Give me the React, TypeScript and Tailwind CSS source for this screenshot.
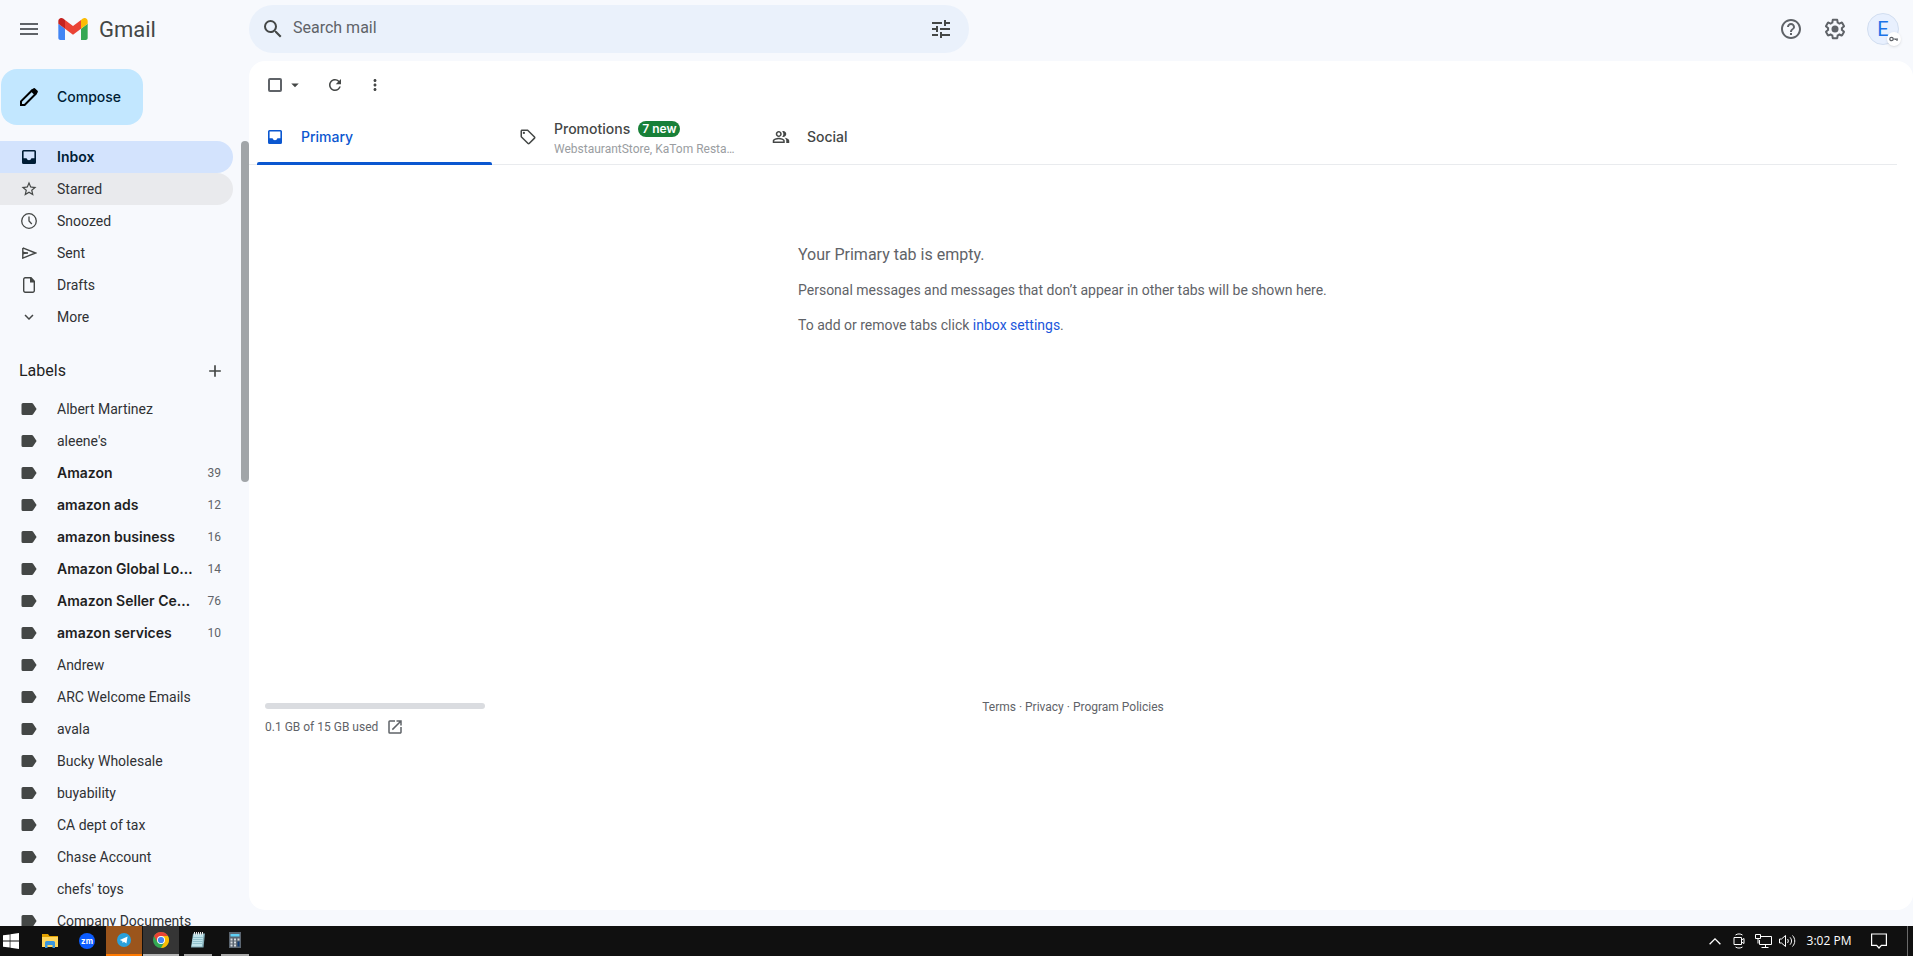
import React, { useState } from "react";
import {
  MdAdd,
  MdArrowDropDown,
  MdExpandMore,
  MdHelpOutline,
  MdMenu,
  MdMoreVert,
  MdOpenInNew,
  MdOutlinePeopleAlt,
  MdOutlineSell,
  MdRefresh,
  MdSearch,
  MdStarBorder,
  MdTune,
} from "react-icons/md";

type Label = { name: string; count?: number };

const labels: Label[] = [
  { name: "Albert Martinez" },
  { name: "aleene's" },
  { name: "Amazon", count: 39 },
  { name: "amazon ads", count: 12 },
  { name: "amazon business", count: 16 },
  { name: "Amazon Global Lo…", count: 14 },
  { name: "Amazon Seller Ce…", count: 76 },
  { name: "amazon services", count: 10 },
  { name: "Andrew" },
  { name: "ARC Welcome Emails" },
  { name: "avala" },
  { name: "Bucky Wholesale" },
  { name: "buyability" },
  { name: "CA dept of tax" },
  { name: "Chase Account" },
  { name: "chefs' toys" },
  { name: "Company Documents" },
];

function GmailMark() {
  return (
    <svg viewBox="52 42 88 66" className="h-[22px] w-[30px]" aria-hidden="true">
      <path fill="#4285f4" d="M58 108h14V74L52 59v43c0 3.32 2.69 6 6 6" />
      <path fill="#34a853" d="M120 108h14c3.32 0 6-2.69 6-6V59l-20 15" />
      <path fill="#fbbc04" d="M120 48v26l20-15v-8c0-7.42-8.47-11.65-14.4-7.2" />
      <path fill="#ea4335" d="M72 74V48l24 18 24-18v26L96 92" />
      <path fill="#c5221f" d="M52 51v8l20 15V48l-5.6-4.2c-5.94-4.45-14.4-.22-14.4 7.2" />
    </svg>
  );
}

function PencilIcon() {
  return (
    <svg viewBox="0 0 18 18" className="size-[18px]" aria-hidden="true">
      <path fill="none" stroke="#000" strokeWidth="2" d="M1 17v-3.600L12.200 2.200l3.600 3.600L4.600 17z" />
      <path fill="#000" d="M10.500 3 13 .7a1.700 1.700 0 0 1 2.400 0l1.900 1.900a1.700 1.700 0 0 1 0 2.400L15 7.500z" />
    </svg>
  );
}

function InboxIcon() {
  return (
    <svg viewBox="0 0 14 14" className="size-[14px] shrink-0" aria-hidden="true">
      <path
        fill="currentColor"
        fillRule="evenodd"
        d="M1.500 0h11A1.500 1.500 0 0 1 14 1.500v11a1.500 1.500 0 0 1-1.500 1.500h-11A1.500 1.500 0 0 1 0 12.500v-11A1.500 1.500 0 0 1 1.500 0zM1.600 1.600v6.600h3C4.900 9.400 5.900 10.200 7 10.200s2.100-.8 2.400-2h3V1.600z"
      />
    </svg>
  );
}

function ClockIcon() {
  return (
    <svg viewBox="0 0 16 16" className="size-4 shrink-0" fill="none" stroke="currentColor" strokeWidth="1.300" aria-hidden="true">
      <circle cx="8" cy="8" r="7.300" />
      <path d="M8 3.500V8l2.800 3" />
    </svg>
  );
}

function SendIcon() {
  return (
    <svg viewBox="0 0 15 12" className="h-3 w-[15px]" aria-hidden="true">
      <path d="M.8.9 13.500 6 .8 11.100V.9M.8 6H6" fill="none" stroke="currentColor" strokeWidth="1.400" />
      <path d="M1 4.600 6.500 6 1 7.400" fill="currentColor" />
    </svg>
  );
}

function FileIcon() {
  return (
    <svg viewBox="0 0 12 16" className="h-4 w-3" aria-hidden="true">
      <path d="M.7 2.200A1.500 1.500 0 0 1 2.200.7H8l3.300 3.600v9.500a1.500 1.500 0 0 1-1.500 1.500H2.200a1.500 1.500 0 0 1-1.500-1.500z" fill="none" stroke="currentColor" strokeWidth="1.400" />
      <path d="M7 .7h1.200L11.700 4.500V5.500H7z" fill="currentColor" />
    </svg>
  );
}

function LabelIcon() {
  return (
    <svg viewBox="0 0 16 12" className="h-3 w-4" aria-hidden="true">
      <path fill="#444746" d="M2 0h8.800c.5 0 1 .25 1.300.65L15.600 6l-3.500 5.350c-.3.4-.8.650-1.300.650H2a1.500 1.500 0 0 1-1.500-1.500v-9A1.500 1.500 0 0 1 2 0z" />
    </svg>
  );
}

function GearIcon() {
  return (
    <svg viewBox="0 0 24 24" className="size-6" aria-hidden="true">
      <path
        fill="currentColor"
        d="M13.850 22.250h-3.700c-.740 0-1.360-.540-1.450-1.270l-.270-1.890c-.270-.140-.530-.290-.790-.460l-1.800.720c-.700.260-1.470-.030-1.810-.650L2.200 15.530c-.350-.660-.200-1.440.360-1.880l1.530-1.190c-.010-.150-.020-.300-.020-.460 0-.150.010-.310.020-.460l-1.520-1.190c-.590-.450-.740-1.260-.370-1.880l1.850-3.190c.340-.620 1.110-.900 1.790-.630l1.810.730c.260-.170.520-.320.780-.460l.270-1.910c.090-.700.710-1.250 1.440-1.250h3.700c.740 0 1.360.540 1.450 1.270l.270 1.890c.270.140.530.290.790.460l1.800-.720c.710-.260 1.480.030 1.820.650l1.840 3.180c.360.660.200 1.440-.360 1.880l-1.520 1.190c.010.150.020.300.020.460s-.010.310-.020.460l1.520 1.190c.560.450.720 1.230.370 1.860l-1.860 3.220c-.340.620-1.110.900-1.800.630l-1.800-.720c-.260.170-.520.320-.780.460l-.270 1.910c-.100.680-.720 1.220-1.460 1.220zm-3.230-2h2.760l.370-2.550.530-.220c.440-.180.880-.440 1.340-.780l.450-.340 2.380.960 1.380-2.400-2.030-1.580.070-.560c.030-.260.060-.510.060-.780s-.030-.530-.060-.780l-.070-.560 2.030-1.580-1.390-2.400-2.390.960-.450-.350c-.420-.320-.870-.580-1.330-.770l-.520-.220-.370-2.550h-2.760l-.370 2.550-.530.210c-.440.190-.880.440-1.340.790l-.450.330-2.380-.950-1.390 2.390 2.030 1.580-.070.560a7 7 0 0 0-.060.790c0 .260.020.530.060.780l.070.560-2.030 1.580 1.380 2.400 2.390-.960.450.350c.430.330.860.580 1.330.770l.530.220.380 2.550z"
      />
      <circle cx="12" cy="12" r="3.500" fill="currentColor" />
    </svg>
  );
}

function NavItem({ icon, text, state }: { icon: React.ReactNode; text: string; state?: "active" | "hover" }) {
  const tone =
    state === "active"
      ? "bg-[#d3e3fd] font-[Inter,sans-serif] font-semibold text-[#001d35]"
      : state === "hover"
        ? "bg-[#e9eaed] text-[#303134]"
        : "text-[#303134]";
  return (
    <li>
      <a href="#" className={`flex h-8 items-center rounded-r-full pl-5 ${tone}`}>
        <span className={`flex w-[18px] justify-center ${state === "active" ? "text-[#001d35]" : "text-[#444746]"}`}>{icon}</span>
        <span className="pl-[19px]">{text}</span>
      </a>
    </li>
  );
}

function Sidebar() {
  return (
    <aside className="flex w-[249px] shrink-0 flex-col">
      <div className="px-px pt-2">
        <button className="flex h-14 w-[142px] items-center gap-[19px] rounded-2xl bg-[#c2e7ff] pl-[19px] font-[Inter,sans-serif] text-sm font-medium text-[#001d35]">
          <PencilIcon />
          Compose
        </button>
      </div>
      <div className="mt-4 flex min-h-0 flex-1">
        <nav className="min-w-0 flex-1 overflow-hidden pr-2 text-sm" aria-label="Mailboxes">
          <ul>
            <NavItem state="active" text="Inbox" icon={<InboxIcon />} />
            <NavItem state="hover" text="Starred" icon={<MdStarBorder size={18} />} />
            <NavItem text="Snoozed" icon={<ClockIcon />} />
            <NavItem text="Sent" icon={<SendIcon />} />
            <NavItem text="Drafts" icon={<FileIcon />} />
            <NavItem text="More" icon={<MdExpandMore size={18} />} />
          </ul>
          <div className="flex h-[60px] items-center justify-between pt-4 pr-2 pl-[19px]">
            <h2 className="text-base text-[#1f1f1f]">Labels</h2>
            <button aria-label="Create new label" className="text-[#444746]">
              <MdAdd size={20} />
            </button>
          </div>
          <ul>
            {labels.map((l) => (
              <li key={l.name}>
                <a href="#" className="flex h-8 items-center pr-3 pl-[21px]">
                  <LabelIcon />
                  <span className={`ml-5 whitespace-nowrap ${l.count ? "font-[Inter,sans-serif] font-semibold text-[#1f1f1f]" : "text-[#303134]"}`}>
                    {l.name}
                  </span>
                  {l.count && <span className="ml-auto text-xs text-[#5f6368]">{l.count}</span>}
                </a>
              </li>
            ))}
          </ul>
        </nav>
        <div className="h-[341px] w-2 rounded-full bg-[#a1a5a8]" />
      </div>
    </aside>
  );
}

function Header() {
  return (
    <header className="flex h-[61px] shrink-0 items-start text-[#5f6368]">
      <div className="flex h-[58px] w-[249px] items-center pl-[17px]">
        <button aria-label="Main menu">
          <MdMenu size={24} />
        </button>
        <a href="#" className="ml-[17px] flex items-center gap-[11px] text-[22px] text-[#444746]" aria-label="Gmail">
          <GmailMark />
          Gmail
        </a>
      </div>
      <form role="search" className="mt-[5px] flex h-12 w-[720px] items-center rounded-full bg-[#eaf1fb] pr-4 pl-3">
        <button type="button" aria-label="Search" className="text-[#444746]">
          <MdSearch size={24} />
        </button>
        <input aria-label="Search mail" placeholder="Search mail" className="ml-2 min-w-0 flex-1 pb-[3px] text-base outline-none placeholder:text-[#5f6368]" />
        <button type="button" aria-label="Show search options" className="text-[#444746]">
          <MdTune size={24} />
        </button>
      </form>
      <div className="ml-auto flex h-[58px] items-center gap-5 pr-[14px]">
        <button aria-label="Support">
          <MdHelpOutline size={24} />
        </button>
        <button aria-label="Settings">
          <GearIcon />
        </button>
        <button aria-label="Account" className="relative flex size-8 items-center justify-center rounded-full border border-[#d2def0] bg-[#e8f0fe] text-xl text-[#1a73e8]">
          E
          <span className="absolute -right-[3px] -bottom-[2px] flex size-[14px] items-center justify-center rounded-full bg-white shadow">
            <svg viewBox="0 0 10 6" className="h-[6px] w-[10px]" aria-hidden="true">
              <circle cx="2.500" cy="3" r="1.700" fill="none" stroke="#5f6368" strokeWidth="1.200" />
              <path d="M4.200 3H9M8 3v2M6.500 3v1" fill="none" stroke="#5f6368" strokeWidth="1.200" />
            </svg>
          </span>
        </button>
      </div>
    </header>
  );
}

function MailPanel() {
  const [checked, setChecked] = useState(false);
  return (
    <main className="mb-4 flex min-w-0 flex-1 flex-col rounded-2xl bg-white pr-4">
      <div className="flex h-12 items-center pl-[19px] text-[#444746]">
        <input
          type="checkbox"
          aria-label="Select"
          checked={checked}
          onChange={(e) => setChecked(e.target.checked)}
          className="size-[14px] appearance-none rounded-xs border-2 border-[#5f6368] checked:bg-[#5f6368]"
        />
        <button aria-label="Select options" className="ml-1">
          <MdArrowDropDown size={18} />
        </button>
        <button aria-label="Refresh" className="ml-[22px]">
          <MdRefresh size={18} />
        </button>
        <button aria-label="More" className="ml-[22px]">
          <MdMoreVert size={18} />
        </button>
      </div>
      <div role="tablist" className="flex h-14 border-b border-[#e9ebee] pl-2 font-[Inter,sans-serif] text-sm font-medium text-[#444746]">
        <button role="tab" aria-selected="true" className="-mb-px flex w-[235px] flex-col text-[#0b57d0]">
          <span className="flex flex-1 items-center gap-[19px] pt-[3px] pl-[11px]">
            <InboxIcon />
            Primary
          </span>
          <span className="h-[3px] w-full rounded-t-xs bg-[#0b57d0]" />
        </button>
        <button role="tab" aria-selected="false" className="flex w-[253px] items-center gap-[17px] pl-[27px] text-left">
          <MdOutlineSell size={18} className="shrink-0" />
          <span className="w-[184px] pt-1">
            <span className="flex h-5 items-center gap-2">
              Promotions
              <span className="rounded-full bg-[#188038] px-1 text-xs leading-4 font-semibold text-white">7 new</span>
            </span>
            <span className="block h-5 font-[Roboto,sans-serif] text-xs leading-5 font-normal whitespace-nowrap text-[#9a9da1]">
              WebstaurantStore, KaTom Resta…
            </span>
          </span>
        </button>
        <button role="tab" aria-selected="false" className="flex items-center gap-[17px] pl-[27px]">
          <MdOutlinePeopleAlt size={18} />
          Social
        </button>
      </div>
      <section className="mx-auto w-[550px] pt-20 text-sm text-[#5f6368]">
        <p className="text-base leading-5">Your Primary tab is empty.</p>
        <p className="mt-[15px] leading-5 whitespace-nowrap">Personal messages and messages that don’t appear in other tabs will be shown here.</p>
        <p className="mt-[15px] leading-5">
          To add or remove tabs click{" "}
          <a href="#" className="text-[#1a56db]">
            inbox settings
          </a>
          .
        </p>
      </section>
      <footer className="mt-auto mb-[173px] grid grid-cols-3 pr-4 pl-4 text-xs text-[#5f6368]">
        <div className="pt-1">
          <div className="h-[6px] w-[220px] rounded-full bg-[#dadce0]" />
          <p className="mt-2 flex items-center gap-2 leading-5">
            0.1 GB of 15 GB used
            <a href="#" aria-label="Manage storage">
              <MdOpenInNew size={18} />
            </a>
          </p>
        </div>
        <p className="text-center leading-4">
          <a href="#">Terms</a> · <a href="#">Privacy</a> · <a href="#">Program Policies</a>
        </p>
      </footer>
    </main>
  );
}

function TaskButton({ name, className, children }: { name: string; className?: string; children: React.ReactNode }) {
  return (
    <button aria-label={name} className={`flex h-full w-9 items-center justify-center ${className ?? ""}`}>
      {children}
    </button>
  );
}

function Taskbar() {
  return (
    <div className="flex h-[30px] shrink-0 items-stretch gap-px bg-[#101010] text-white">
      <button aria-label="Start" className="flex w-[31px] items-center pl-[3px]">
        <svg viewBox="0 0 16 16" className="size-4" aria-hidden="true">
          <path fill="#fff" d="M0 2.300 6.700 1.400v6.200H0zM7.400 1.300 16 0v7.600H7.400zM0 8.400h6.700v6.200L0 13.700zM7.400 8.400H16V16l-8.600-1.300z" />
        </svg>
      </button>
      <TaskButton name="File Explorer">
        <svg viewBox="0 0 16 14" className="h-[14px] w-4" aria-hidden="true">
          <path fill="#e2a100" d="M0 0h6l1.500 2H16v4H0z" />
          <path fill="#ffd75e" d="M0 3h16v10H0z" />
          <path fill="#3a96dd" d="M3 14V8.500A1.500 1.500 0 0 1 4.500 7h7A1.500 1.500 0 0 1 13 8.500V14h-2.500v-3h-5v3z" />
        </svg>
      </TaskButton>
      <TaskButton name="Zoom">
        <span className="flex size-4 items-center justify-center rounded-full bg-[#0b5cff] font-[Inter,sans-serif] text-[8px] leading-none font-bold">zm</span>
      </TaskButton>
      <TaskButton name="Telegram" className="border-b-2 border-[#ff7a00] bg-[#9b551c]">
        <svg viewBox="0 0 14 14" className="size-[14px]" aria-hidden="true">
          <circle cx="7" cy="7" r="7" fill="#2aa1dc" />
          <path fill="#fff" d="M2.800 6.900 10.600 3.600 9.400 10.400 6.900 8.700 5.600 9.900 5.300 7.900z" />
        </svg>
      </TaskButton>
      <TaskButton name="Chrome" className="border-b-2 border-[#b5b5b5] bg-[#353535]">
        <svg viewBox="0 0 16 16" className="size-4" aria-hidden="true">
          <circle cx="8" cy="8" r="8" fill="#34a853" />
          <path fill="#ea4335" d="M1.070 4A8 8 0 0 1 14.930 4H8L4.540 10z" />
          <path fill="#fbbc04" d="M14.930 4A8 8 0 0 1 8 16l3.460-6L8 4z" />
          <circle cx="8" cy="8" r="4" fill="#fff" />
          <circle cx="8" cy="8" r="3.100" fill="#4285f4" />
        </svg>
      </TaskButton>
      <TaskButton name="Notepad" className="px-1">
        <span className="flex h-full w-7 items-center justify-center border-b-2 border-[#a8a8a8]">
          <svg viewBox="0 0 16 16" className="size-4" aria-hidden="true">
            <path fill="#7fa8b3" d="M3 1.500h12L13.500 15.500H1z" />
            <path fill="#bfe3ea" d="M3.500 2.500h10L12 14.500H1.500z" />
            <path stroke="#7db3c0" strokeWidth=".7" d="M3.300 5.500h9.500M3 7.500h9.500M2.800 9.500h9.500M2.500 11.500H12" />
            <path stroke="#e8e8e8" d="M4.500 0v3M6.500 0v3M8.500 0v3M10.500 0v3M12.500 0v3" />
          </svg>
        </span>
      </TaskButton>
      <TaskButton name="Calculator" className="px-1">
        <span className="flex h-full w-7 items-center justify-center border-b-2 border-[#a8a8a8]">
          <svg viewBox="0 0 12 16" className="h-4 w-3" aria-hidden="true">
            <path fill="#5b6570" d="M0 0h12v16H0z" />
            <path fill="#5fd0f5" d="M1.500 2h9v2.500h-9z" />
            <path fill="#d5dade" d="M1.500 6.500h2v2h-2zM5 6.500h2v2H5zM8.500 6.500h2v2h-2zM1.500 9.500h2v2h-2zM5 9.500h2v2H5zM1.500 12.500h2v2h-2zM5 12.500h2v2H5z" />
            <path fill="#0e3a75" d="M8.500 9.500h2v5h-2z" />
          </svg>
        </span>
      </TaskButton>

      <div className="ml-auto flex items-center">
        <button aria-label="Show hidden icons" className="flex w-6 justify-center">
          <svg viewBox="0 0 12 7" className="h-[7px] w-3" fill="none" stroke="#fff" strokeWidth="1.300" aria-hidden="true">
            <path d="M.6 6.300 6 .9l5.400 5.400" />
          </svg>
        </button>
        <button aria-label="Camera in use" className="flex w-6 justify-center">
          <svg viewBox="0 0 12 16" className="h-4 w-3" fill="none" stroke="#fff" aria-hidden="true">
            <path d="M1 4.500h7.500v7H1zM8.500 7l2.500-1.500v5L8.500 9M2.500 2C4.500.6 7.500.6 9.500 2M2.500 14c2 1.400 5 1.400 7 0" />
          </svg>
        </button>
        <button aria-label="Network" className="flex w-6 justify-center">
          <svg viewBox="0 0 17 14" className="h-[14px] w-[17px]" fill="none" stroke="#fff" aria-hidden="true">
            <path d="M6 2.500h10.500v8H4.500V6M10.500 10.500v3M6.500 13.500h7M.5.500h5v4h-5zM3 4.500v5" />
          </svg>
        </button>
        <button aria-label="Volume" className="flex w-6 justify-center">
          <svg viewBox="0 0 17 14" className="h-[14px] w-[17px]" fill="none" stroke="#fff" aria-hidden="true">
            <path d="M.5 5h2L6.500 1.500v11L2.500 9h-2zM8.500 5c1 1.200 1 2.800 0 4M11 3.300c2 2.200 2 5.200 0 7.400M13.500 1.500c3 3.200 3 7.800 0 11" />
          </svg>
        </button>
        <time className="w-[60px] text-center font-['Open_Sans','Noto_Sans',sans-serif] text-xs">3:02 PM</time>
        <button aria-label="Notifications" className="flex w-10 justify-center">
          <svg viewBox="0 0 16 16" className="size-4" fill="none" stroke="#fff" strokeWidth="1.200" aria-hidden="true">
            <path d="M.6 1h14.800v11.400h-5L8 15l-2.400-2.600h-5z" />
          </svg>
        </button>
        <span className="ml-2 h-full w-[6px] border-l border-[#6a6a6a]" />
      </div>
    </div>
  );
}

export default function App() {
  return (
    <div className="flex h-screen flex-col overflow-hidden bg-[#f7f9fd] font-[Roboto,'Open_Sans',sans-serif]">
      <Header />
      <div className="flex min-h-0 flex-1">
        <Sidebar />
        <MailPanel />
      </div>
      <Taskbar />
    </div>
  );
}
